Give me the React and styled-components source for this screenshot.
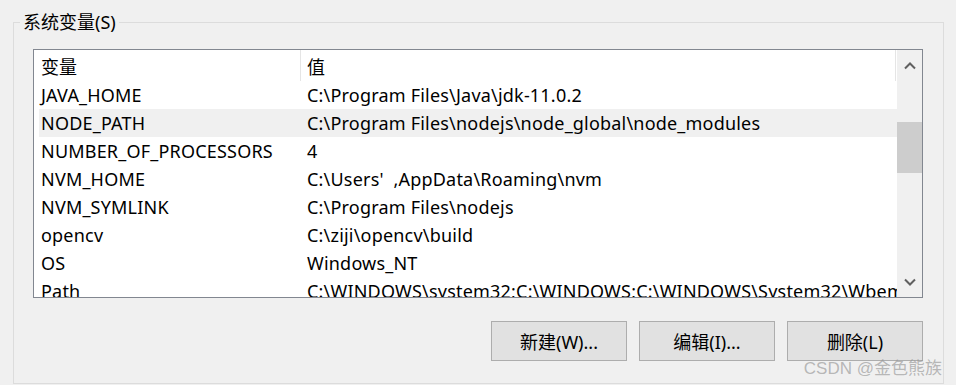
import styled, { createGlobalStyle } from "styled-components";

const GlobalStyle = createGlobalStyle`
  html, body {
    margin: 0;
    padding: 0;
    background: #f0f0f0;
  }
  body {
    font-family: "Noto Sans", "Noto Sans CJK SC", sans-serif;
    font-size: 18px;
    color: #000;
  }
`;

const Page = styled.div`
  position: relative;
  width: 956px;
  height: 385px;
  padding: 22px 13px 0 13px;
  box-sizing: border-box;
  overflow: hidden;
`;

const Group = styled.div`
  position: relative;
  box-sizing: border-box;
  width: 931px;
  height: 362px;
  border: 1px solid #dcdcdc;
  padding: 26px 0 0 19px;
`;

const GroupTitle = styled.div`
  position: absolute;
  top: -13px;
  left: 6px;
  padding: 0 3px;
  background: #f0f0f0;
  line-height: 24px;
  font-size: 18px;
`;

const ListBox = styled.div`
  box-sizing: border-box;
  width: 890px;
  height: 249px;
  border: 1px solid #828790;
  background: #fff;
  display: flex;
  overflow: hidden;
`;

const ListContent = styled.div`
  flex: 1;
  display: flex;
  flex-direction: column;
  overflow: hidden;
`;

const HeaderRow = styled.div`
  display: flex;
  height: 31px;
  flex-shrink: 0;
`;

const HeaderCell = styled.div`
  box-sizing: border-box;
  width: ${(p) => p.$width}px;
  padding-left: ${(p) => p.$pad}px;
  display: flex;
  align-items: center;
  border-right: 1px solid #e5e5e5;
  white-space: nowrap;
`;

const Row = styled.div`
  display: flex;
  height: 28px;
  flex-shrink: 0;
  margin-left: 5px;
  background: ${(p) => (p.$selected ? "#f0f0f0" : "transparent")};
`;

const Cell = styled.div`
  box-sizing: border-box;
  width: ${(p) => p.$width}px;
  padding-left: 2px;
  display: flex;
  align-items: center;
  white-space: pre;
  overflow: hidden;
  letter-spacing: 0.2px;
`;

const ScrollBar = styled.div`
  width: 25px;
  flex-shrink: 0;
  background: #f0f0f0;
  display: flex;
  flex-direction: column;
`;

const ArrowButton = styled.div`
  height: 31px;
  display: flex;
  align-items: center;
  justify-content: center;
`;

const Track = styled.div`
  flex: 1;
  position: relative;
`;

const Thumb = styled.div`
  position: absolute;
  left: 0;
  right: 0;
  top: ${(p) => p.$top}px;
  height: ${(p) => p.$height}px;
  background: #cdcdcd;
`;

const ButtonRow = styled.div`
  display: flex;
  justify-content: flex-end;
  gap: 12px;
  width: 890px;
  margin-top: 23px;
`;

const Button = styled.button`
  box-sizing: border-box;
  width: 136px;
  height: 40px;
  border: 1px solid #adadad;
  background: #e1e1e1;
  font-family: "Noto Sans", "Noto Sans CJK SC", sans-serif;
  font-size: 18px;
  color: #000;
  padding: 0;
`;

const Watermark = styled.div`
  position: absolute;
  right: 14px;
  bottom: 6px;
  font-family: "Liberation Sans", "Noto Sans CJK SC", sans-serif;
  font-size: 17px;
  color: rgba(150, 150, 150, 0.65);
  white-space: nowrap;
`;

const Chevron = ({ down }) => (
  <svg width="12" height="8" viewBox="0 0 12 8">
    <path
      d={down ? "M1 1.5 L6 6.5 L11 1.5" : "M1 6.5 L6 1.5 L11 6.5"}
      fill="none"
      stroke="#606060"
      strokeWidth="2"
    />
  </svg>
);

const rows = [
  ["JAVA_HOME", "C:\\Program Files\\Java\\jdk-11.0.2"],
  ["NODE_PATH", "C:\\Program Files\\nodejs\\node_global\\node_modules", true],
  ["NUMBER_OF_PROCESSORS", "4"],
  ["NVM_HOME", "C:\\Users'  ,AppData\\Roaming\\nvm"],
  ["NVM_SYMLINK", "C:\\Program Files\\nodejs"],
  ["opencv", "C:\\ziji\\opencv\\build"],
  ["OS", "Windows_NT"],
  ["Path", "C:\\WINDOWS\\system32;C:\\WINDOWS;C:\\WINDOWS\\System32\\Wbem"],
];

export default function App() {
  return (
    <>
      <GlobalStyle />
      <Page>
        <Group>
          <GroupTitle>系统变量(S)</GroupTitle>
          <ListBox>
            <ListContent>
              <HeaderRow>
                <HeaderCell $width={267} $pad={7}>变量</HeaderCell>
                <HeaderCell $width={595} $pad={6}>值</HeaderCell>
              </HeaderRow>
              {rows.map(([name, value, selected]) => (
                <Row key={name} $selected={selected}>
                  <Cell $width={266}>{name}</Cell>
                  <Cell $width={592}>{value}</Cell>
                </Row>
              ))}
            </ListContent>
            <ScrollBar>
              <ArrowButton>
                <Chevron />
              </ArrowButton>
              <Track>
                <Thumb $top={41} $height={51} />
              </Track>
              <ArrowButton>
                <Chevron down />
              </ArrowButton>
            </ScrollBar>
          </ListBox>
          <ButtonRow>
            <Button>新建(W)...</Button>
            <Button>编辑(I)...</Button>
            <Button>删除(L)</Button>
          </ButtonRow>
        </Group>
        <Watermark>CSDN @金色熊族</Watermark>
      </Page>
    </>
  );
}
